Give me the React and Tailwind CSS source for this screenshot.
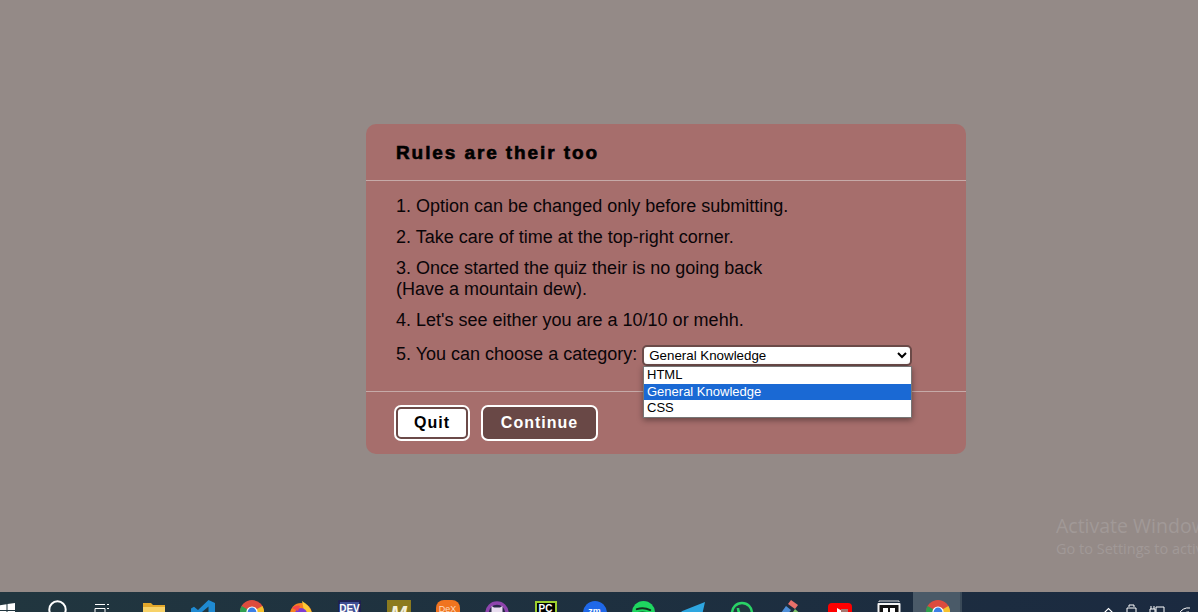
import React from "react";

const rules = [
  "1. Option can be changed only before submitting.",
  "2. Take care of time at the top-right corner.",
];

function Chrome() {
  return (
    <svg viewBox="0 0 24 24" className="w-6 h-6">
      <circle cx="12" cy="12" r="12" fill="#dd4b3e" />
      <path d="M12 12 L22.4 6 A12 12 0 0 1 12 24 Z" fill="#f6c12d" />
      <path d="M12 12 L12 24 A12 12 0 0 1 1.6 6 Z" fill="#2f9e4f" />
      <circle cx="12" cy="12" r="5.6" fill="#fff" />
      <circle cx="12" cy="12" r="4.4" fill="#3b7fe6" />
    </svg>
  );
}

const icons = [
  {
    top: "pt-[8px]",
    svg: (
      <svg viewBox="0 0 24 24" className="w-6 h-6" fill="none" stroke="#fff" strokeWidth="2">
        <circle cx="13.5" cy="9.500" r="8.200" />
      </svg>
    ),
  },
  {
    top: "pt-[12px] pr-[6px]",
    svg: (
      <svg viewBox="0 0 16 16" className="w-4 h-4" fill="none" stroke="#fff" strokeWidth="1">
        <path d="M1 0.5h10M1 4.500h10v6H1zM13 0.5h2M13 4.500h2" />
      </svg>
    ),
  },
  {
    top: "pt-[11px]",
    svg: (
      <svg viewBox="0 0 22 20" className="w-[22px] h-5">
        <path d="M0 0h8l2 2h12v16H0z" fill="#e3a82b" />
        <path d="M0 4h22v16H0z" fill="#f7d268" />
      </svg>
    ),
  },
  {
    top: "pt-[8px]",
    svg: (
      <svg viewBox="0 0 24 24" className="w-6 h-6">
        <path d="M17.500 0L24 3v18l-6.500 3L7 14l-4 3.200L0 15.500V8.500l3-1.700L7 10z" fill="#1f8ad2" />
        <path d="M17.500 6.500L11 12l6.500 5.500z" fill="#21363f" />
      </svg>
    ),
  },
  { top: "pt-[8px]", svg: <Chrome /> },
  {
    top: "pt-[9px]",
    svg: (
      <svg viewBox="0 0 24 24" className="w-6 h-6">
        <circle cx="12" cy="13" r="11" fill="#f5811f" />
        <path d="M13 0c5 3 9 7 10 13l-8-3z" fill="#fcc935" />
        <circle cx="12" cy="13" r="6" fill="#7d3bd1" />
        <path d="M3 7c2-2 5-3 8-2l-2 5z" fill="#f5464b" />
      </svg>
    ),
  },
  {
    top: "pt-[8px]",
    svg: (
      <div className="w-[23px] h-[24px] rounded-[2px] bg-[#3f4d94] border-2 border-[#1e2150] border-b-0 flex justify-center">
        <span className="font-['Liberation_Sans',sans-serif] font-bold text-[10px] leading-[13px] text-white">DEV</span>
      </div>
    ),
  },
  {
    top: "pt-[8px]",
    svg: (
      <div className="w-6 h-6 bg-[#8b7a1e] flex justify-center">
        <span className="font-['Liberation_Sans',sans-serif] font-bold italic text-[20px] leading-[27px] text-[#f3efd8]">M</span>
      </div>
    ),
  },
  {
    top: "pt-[8px]",
    svg: (
      <div className="w-6 h-6 rounded-[8px] bg-[#f0741f] flex justify-center">
        <span className="font-['Liberation_Sans',sans-serif] text-[9px] leading-[18px] text-[#ffd9bd]">DeX</span>
      </div>
    ),
  },
  {
    top: "pt-[9px]",
    svg: (
      <svg viewBox="0 0 24 24" className="w-6 h-6">
        <circle cx="12" cy="12" r="10" fill="#2a2a4a" stroke="#8e44ad" strokeWidth="3.500" />
        <path d="M6.500 5l2.500 1.500h6L17.500 5v9c0 2-2 3-5.500 3s-5.500-1-5.500-3z" fill="#e8dcef" />
      </svg>
    ),
  },
  {
    top: "pt-[9px]",
    svg: (
      <div className="w-[22px] h-[22px] bg-black border-2 border-[#9ccf2e] flex justify-center">
        <span className="font-['Liberation_Sans',sans-serif] font-bold text-[10px] leading-[12px] text-white">PC</span>
      </div>
    ),
  },
  {
    top: "pt-[9px]",
    svg: (
      <div className="w-6 h-6 rounded-full bg-[#1f68e8] flex justify-center">
        <span className="font-['Liberation_Sans',sans-serif] font-bold text-[9px] leading-[20px] text-white">zm</span>
      </div>
    ),
  },
  {
    top: "pt-[9px]",
    svg: (
      <svg viewBox="0 0 24 24" className="w-[23px] h-[23px]">
        <circle cx="12" cy="12" r="12" fill="#1ed760" />
        <path d="M5 8.500c5-1.500 10-1 14 1M6 12.500c4-1 8.500-.7 12 1M7 16c3-.7 7-.5 10 1" fill="none" stroke="#12301f" strokeWidth="2" strokeLinecap="round" />
      </svg>
    ),
  },
  {
    top: "pt-[10px]",
    svg: (
      <svg viewBox="0 0 24 22" className="w-6 h-[22px]">
        <path d="M24 0L0 9.500l7 3L9.500 21l4-5.500 6 4.500z" fill="#2ea6e0" />
      </svg>
    ),
  },
  {
    top: "pt-[9px]",
    svg: (
      <svg viewBox="0 0 24 24" className="w-6 h-6">
        <circle cx="12" cy="12" r="10" fill="#21363f" stroke="#2ad366" strokeWidth="2.500" />
        <path d="M8 7c0 5 4 9 9 9" fill="none" stroke="#2ad366" strokeWidth="2.500" />
      </svg>
    ),
  },
  {
    top: "pt-[8px]",
    svg: (
      <svg viewBox="0 0 26 24" className="w-[26px] h-6">
        <path d="M13 0l7 5-3 4-7-5z" fill="#e8706a" />
        <path d="M8 6l5 4-8 10-5-3z" fill="#4e8fd8" />
        <path d="M17 9l9 8-4 7-9-9z" fill="#7fc66a" />
      </svg>
    ),
  },
  {
    top: "pt-[11px]",
    svg: (
      <svg viewBox="0 0 24 20" className="w-6 h-5">
        <rect width="24" height="18" rx="4" fill="#f00" />
        <path d="M9 5l7 4-7 4z" fill="#fff" />
        <rect x="13" y="6" width="7" height="6" fill="#a8766f" />
      </svg>
    ),
  },
  {
    top: "pt-[8px]",
    svg: (
      <svg viewBox="0 0 24 24" className="w-6 h-6">
        <path d="M2 2V1h20v1" fill="none" stroke="#d8d8d8" />
        <rect x="0.500" y="3" width="23" height="21" rx="1" fill="#f4f4f4" />
        <rect x="2.500" y="5" width="19" height="19" fill="#111" />
        <rect x="6" y="8" width="5" height="4" fill="#fff" />
        <rect x="13" y="8" width="5" height="4" fill="#fff" />
      </svg>
    ),
  },
];

export default function App() {
  return (
    <div className="h-[612px] w-[1198px] overflow-hidden flex flex-col bg-[#948a87] font-['Liberation_Sans',Arial,sans-serif] relative">
      <main className="flex-1 pt-[124px] pl-[366px]">
        <div className="w-[600px] h-[330px] bg-[#a66e6c] rounded-[10px] flex flex-col text-[#0a0508]">
          <header className="h-[57px] shrink-0 border-b border-[#c6aaa8] pl-[30px] pt-[17px]">
            <h1 className="text-[19px] leading-[24px] font-bold tracking-[1.9px] text-black [-webkit-text-stroke:0.6px_black]">Rules are their too</h1>
          </header>

          <section className="flex-1 pl-[30px] pt-[15px] text-[18px] leading-[21px]">
            {rules.map((rule) => (
              <p key={rule} className="mb-[10px]">{rule}</p>
            ))}
            <p className="mb-[10px]">
              3. Once started the quiz their is no going back
              <br />
              (Have a mountain dew).
            </p>
            <p className="mb-[13px]">4. Let's see either you are a 10/10 or mehh.</p>
            <div className="flex items-start gap-[5px] relative">
              <span>5. You can choose a category:</span>
              <select
                defaultValue="gk"
                className="w-[270px] h-[21px] mt-[1px] text-[13.33px] leading-[16px] text-black bg-white border-2 border-[#6b4a48] rounded-[5px] pl-[1px] outline-none"
              >
                <option value="html">HTML</option>
                <option value="gk">General Knowledge</option>
                <option value="css">CSS</option>
              </select>
              <ul className="absolute left-[247px] top-[22px] w-[269px] bg-white border border-[#767676] shadow-[0_2px_6px_rgba(0,0,0,0.4)] text-[13px] leading-[16.500px] text-black">
                <li className="pl-[3px]">HTML</li>
                <li className="pl-[3px] bg-[#1a69d4] text-white">General Knowledge</li>
                <li className="pl-[3px]">CSS</li>
              </ul>
            </div>
          </section>

          <footer className="h-[63px] shrink-0 border-t border-[#c6aaa8] pl-[28px] pt-[13px] flex items-start gap-[11px]">
            <button className="w-[76px] h-[36px] rounded-[7px] bg-white border-2 border-white outline-2 -outline-offset-4 outline-[#6b4a48] text-black text-[16px] font-bold tracking-[1px]">
              Quit
            </button>
            <button className="w-[117px] h-[36px] rounded-[7px] bg-[#694846] border-2 border-white text-white text-[16px] font-bold tracking-[1px]">
              Continue
            </button>
          </footer>
        </div>
      </main>

      <div className="absolute left-[1056px] top-[512px] whitespace-nowrap font-['Open_Sans',sans-serif] text-[#a19997]">
        <div className="text-[19.500px] leading-[27px]">Activate Windows</div>
        <div className="text-[14.500px] leading-[19px]">Go to Settings to activate Windows.</div>
      </div>

      <nav className="h-[20px] shrink-0 flex overflow-hidden bg-gradient-to-r from-[#21363f] to-[#1b2a40]">
        <div className="w-[31px] shrink-0 pt-[11px]">
          <svg viewBox="0 0 15 15" className="w-[15px] h-[15px]" fill="#fff">
            <path d="M0 2.200L6.500 1.200V7H0zM7.500 1L15 0v7H7.500zM0 8h6.500v6L0 13zM7.500 8H15v7l-7.500-1z" />
          </svg>
        </div>
        {icons.map((icon, i) => (
          <div key={i} className={`w-[49px] shrink-0 flex justify-center ${icon.top}`}>
            {icon.svg}
          </div>
        ))}
        <div className="w-[47px] shrink-0 flex justify-center pt-[8px] pl-[2px] bg-[#4a5a68]">
          <Chrome />
        </div>
        <div className="w-[2px] shrink-0 bg-[#3a4a58]" />
        <div className="flex-1 flex items-start pl-[142px] gap-[11px]">
          <svg viewBox="0 0 12 8" className="w-[9px] h-2 mt-[14px]" fill="none" stroke="#fff" strokeWidth="1.500"><path d="M1 7l5-5 5 5" /></svg>
          <svg viewBox="0 0 12 12" className="w-3 h-3 mt-[12px] ml-[2px]" fill="none" stroke="#fff"><path d="M1 4h9v8H1zM3 3V1h5v2" /></svg>
          <svg viewBox="0 0 16 12" className="w-4 h-3 mt-[13px]" fill="none" stroke="#fff"><path d="M1 4h5v8H1zM7 2h8v10H7zM2 4V1M5 4V1" /></svg>
          <svg viewBox="0 0 16 12" className="w-4 h-3 mt-[14px] ml-[2px]" fill="none" stroke="#fff"><path d="M1 8a10 10 0 0 1 11-6M4 11a7 7 0 0 1 7-5" /></svg>
        </div>
      </nav>
    </div>
  );
}
